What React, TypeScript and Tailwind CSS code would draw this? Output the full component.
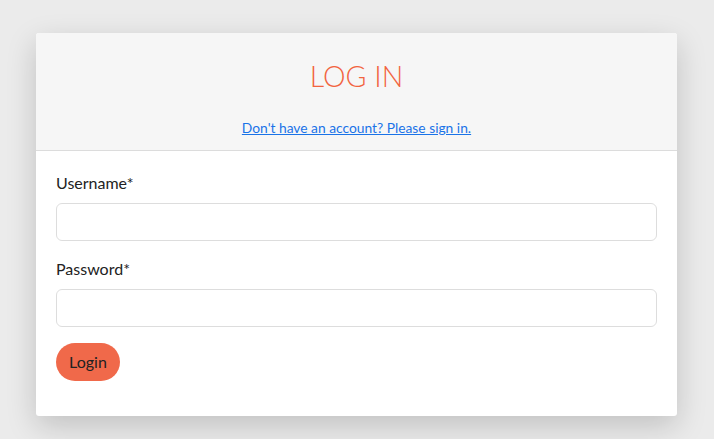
export default function App() {
  return (
    <div className="min-h-[439px] bg-[#ebebeb] pt-[33px] font-['Lato','Open_Sans',sans-serif]">
      <div className="ml-[36px] w-[641px] overflow-hidden rounded-[3px] bg-white shadow-[0_10px_30px_rgba(0,0,0,0.18)]">
        <div className="flex flex-col items-center border-b border-[#dcdcdc] bg-[#f6f6f6] pt-[25px] pb-[12px]">
          <h1 className="h-[36px] text-[28.5px] leading-[36px] font-light text-[#f2643f]">LOG IN</h1>
          <a href="#" className="mt-[24px] text-[13.8px] leading-[20px] text-[#1a73e8] underline">
            Don't have an account? Please sign in.
          </a>
        </div>
        <form className="flex flex-col px-[20px] pt-[20px] pb-[35px]">
          <label className="text-[16px] leading-[24px] text-[#222]">Username*</label>
          <input className="mt-[8px] h-[38px] w-[601px] rounded-[6px] border border-[#dddddd] px-3 outline-none" />
          <label className="mt-[16px] text-[16px] leading-[24px] text-[#222]">Password*</label>
          <input type="password" className="mt-[8px] h-[38px] w-[601px] rounded-[6px] border border-[#dddddd] px-3 outline-none" />
          <button type="button" className="mt-[16px] h-[38px] w-[64px] rounded-full bg-[#f0694a] text-[16px] text-[#222]">
            Login
          </button>
        </form>
      </div>
    </div>
  );
}
